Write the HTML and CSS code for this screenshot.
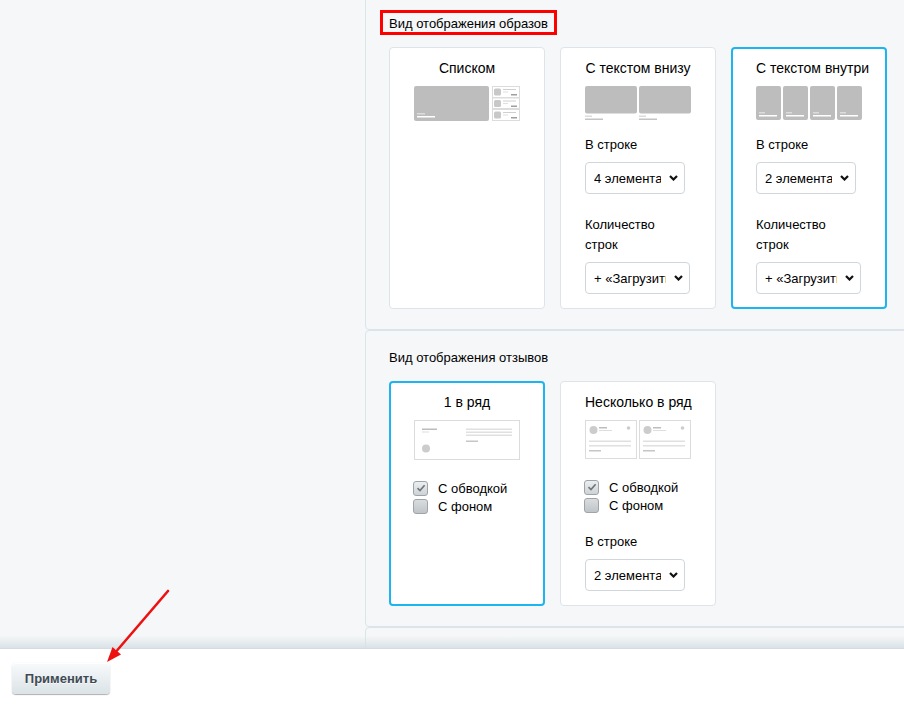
FILE: index.html
```html
<!DOCTYPE html>
<html lang="ru">
<head>
<meta charset="utf-8">
<title>Настройки</title>
<link rel="stylesheet" href="styles.css">
</head>
<body>
<div class="app">
  <div class="page">
    <div class="side"></div>
    <div class="content">
      <section class="sec sec1">
        <div class="sec-title marked">Вид отображения образов</div>
        <div class="cards">
          <div class="card">
            <div class="card-title">Списком</div>
            <svg class="thumb" width="106" height="35" viewBox="0 0 106 35">
              <rect x="0" y="0" width="75" height="35" rx="2" fill="#bdbdbd"/>
              <rect x="3" y="27" width="8" height="1.5" fill="#dcdcdc"/>
              <rect x="3" y="30" width="18" height="1.5" fill="#ffffff"/>
              <g fill="#fff" stroke="#dcdcdc" stroke-width="1">
                <rect x="78.5" y="0.5" width="27" height="11"/>
                <rect x="78.5" y="12" width="27" height="10.5"/>
                <rect x="78.5" y="23.5" width="27" height="11"/>
              </g>
              <g>
                <rect x="80" y="2.5" width="7" height="7" rx="1.5" fill="#c8c8c8"/>
                <rect x="89" y="3" width="13" height="1" fill="#cfcfcf"/>
                <rect x="89" y="5.5" width="5" height="1" fill="#e0e0e0"/>
                <rect x="97" y="8" width="6" height="1.5" fill="#9e9e9e"/>
                <rect x="80" y="14" width="7" height="7" rx="1.5" fill="#c8c8c8"/>
                <rect x="89" y="14.5" width="13" height="1" fill="#cfcfcf"/>
                <rect x="89" y="17" width="5" height="1" fill="#e0e0e0"/>
                <rect x="97" y="19.5" width="6" height="1.5" fill="#9e9e9e"/>
                <rect x="80" y="25.5" width="7" height="7" rx="1.5" fill="#c8c8c8"/>
                <rect x="89" y="26" width="13" height="1" fill="#cfcfcf"/>
                <rect x="89" y="28.5" width="5" height="1" fill="#e0e0e0"/>
                <rect x="97" y="31" width="6" height="1.5" fill="#9e9e9e"/>
              </g>
            </svg>
          </div>
          <div class="card">
            <div class="card-title">С текстом внизу</div>
            <svg class="thumb" width="106" height="35" viewBox="0 0 106 35">
              <rect x="0" y="0" width="52" height="27.5" rx="2" fill="#bdbdbd"/>
              <rect x="54" y="0" width="52" height="27.5" rx="2" fill="#bdbdbd"/>
              <rect x="0" y="29.5" width="7" height="1.5" fill="#dcdcdc"/>
              <rect x="0" y="32.5" width="18" height="1.5" fill="#c4c4c4"/>
              <rect x="54" y="29.5" width="7" height="1.5" fill="#dcdcdc"/>
              <rect x="54" y="32.5" width="18" height="1.5" fill="#c4c4c4"/>
            </svg>
            <div class="field first">
              <div class="label">В строке</div>
              <div class="select w100"><span class="val">4 элемента</span><svg class="chev" width="9" height="6" viewBox="0 0 9 6"><path d="M1 1 L4.5 4.5 L8 1" fill="none" stroke="#111" stroke-width="2.2"/></svg></div>
            </div>
            <div class="field">
              <div class="label">Количество<br>строк</div>
              <div class="select w105"><span class="val">+ «Загрузить ещё»</span><svg class="chev" width="9" height="6" viewBox="0 0 9 6"><path d="M1 1 L4.5 4.5 L8 1" fill="none" stroke="#111" stroke-width="2.2"/></svg></div>
            </div>
          </div>
          <div class="card sel">
            <div class="card-title">С текстом внутри</div>
            <svg class="thumb" width="106" height="35" viewBox="0 0 106 35">
              <g fill="#bdbdbd">
                <rect x="0" y="0" width="25" height="34" rx="2"/>
                <rect x="27" y="0" width="25" height="34" rx="2"/>
                <rect x="54" y="0" width="25" height="34" rx="2"/>
                <rect x="81" y="0" width="25" height="34" rx="2"/>
              </g>
              <g fill="#dcdcdc">
                <rect x="3" y="26" width="6" height="1.5"/>
                <rect x="30" y="26" width="6" height="1.5"/>
                <rect x="57" y="26" width="6" height="1.5"/>
                <rect x="84" y="26" width="6" height="1.5"/>
              </g>
              <g fill="#fff">
                <rect x="3" y="29" width="18" height="1.5"/>
                <rect x="30" y="29" width="18" height="1.5"/>
                <rect x="57" y="29" width="18" height="1.5"/>
                <rect x="84" y="29" width="18" height="1.5"/>
              </g>
            </svg>
            <div class="field first">
              <div class="label">В строке</div>
              <div class="select w100"><span class="val">2 элемента</span><svg class="chev" width="9" height="6" viewBox="0 0 9 6"><path d="M1 1 L4.5 4.5 L8 1" fill="none" stroke="#111" stroke-width="2.2"/></svg></div>
            </div>
            <div class="field">
              <div class="label">Количество<br>строк</div>
              <div class="select w105"><span class="val">+ «Загрузить ещё»</span><svg class="chev" width="9" height="6" viewBox="0 0 9 6"><path d="M1 1 L4.5 4.5 L8 1" fill="none" stroke="#111" stroke-width="2.2"/></svg></div>
            </div>
          </div>
        </div>
      </section>

      <section class="sec sec2">
        <div class="sec-title">Вид отображения отзывов</div>
        <div class="cards">
          <div class="card sel">
            <div class="card-title">1 в ряд</div>
            <svg class="thumb" width="106" height="40" viewBox="0 0 106 40">
              <rect x="0.5" y="0.5" width="105" height="39" fill="#fff" stroke="#dcdcdc"/>
              <rect x="8" y="8.5" width="15" height="1.5" fill="#bdbdbd"/>
              <rect x="8" y="11.5" width="7" height="1" fill="#dedede"/>
              <circle cx="12" cy="28.5" r="4" fill="#cccccc"/>
              <rect x="52" y="8.5" width="46" height="1.5" fill="#e0e0e0"/>
              <rect x="52" y="11.5" width="46" height="1.5" fill="#e0e0e0"/>
              <rect x="52" y="14.5" width="46" height="1.5" fill="#e0e0e0"/>
              <rect x="52" y="20.5" width="12" height="1.5" fill="#c6c6c6"/>
            </svg>
            <div class="checks">
              <div class="check"><span class="box on"><svg width="12" height="12" viewBox="0 0 12 12"><path d="M2.5 6.2 L5 8.6 L9.6 3.2" fill="none" stroke="#6f767b" stroke-width="1.6"/></svg></span>С обводкой</div>
              <div class="check"><span class="box"></span>С фоном</div>
            </div>
          </div>
          <div class="card">
            <div class="card-title">Несколько в ряд</div>
            <svg class="thumb" width="106" height="40" viewBox="0 0 106 40">
              <g>
                <rect x="0.5" y="0.5" width="51" height="38" fill="#fff" stroke="#dcdcdc"/>
                <circle cx="8.5" cy="10" r="4" fill="#cccccc"/>
                <rect x="14" y="7" width="8" height="1.5" fill="#bdbdbd"/>
                <rect x="14" y="10" width="13" height="1" fill="#dedede"/>
                <circle cx="43.5" cy="8" r="1.8" fill="#cccccc"/>
                <rect x="4" y="20.5" width="42" height="1.5" fill="#e0e0e0"/>
                <rect x="4" y="25" width="42" height="1.5" fill="#e0e0e0"/>
                <rect x="4" y="30" width="12" height="1.5" fill="#c6c6c6"/>
              </g>
              <g transform="translate(54 0)">
                <rect x="0.5" y="0.5" width="51" height="38" fill="#fff" stroke="#dcdcdc"/>
                <circle cx="8.5" cy="10" r="4" fill="#cccccc"/>
                <rect x="14" y="7" width="8" height="1.5" fill="#bdbdbd"/>
                <rect x="14" y="10" width="13" height="1" fill="#dedede"/>
                <circle cx="43.5" cy="8" r="1.8" fill="#cccccc"/>
                <rect x="4" y="20.5" width="42" height="1.5" fill="#e0e0e0"/>
                <rect x="4" y="25" width="42" height="1.5" fill="#e0e0e0"/>
                <rect x="4" y="30" width="12" height="1.5" fill="#c6c6c6"/>
              </g>
            </svg>
            <div class="checks">
              <div class="check"><span class="box on"><svg width="12" height="12" viewBox="0 0 12 12"><path d="M2.5 6.2 L5 8.6 L9.6 3.2" fill="none" stroke="#6f767b" stroke-width="1.6"/></svg></span>С обводкой</div>
              <div class="check"><span class="box"></span>С фоном</div>
            </div>
            <div class="field after-checks">
              <div class="label">В строке</div>
              <div class="select w100"><span class="val">2 элемента</span><svg class="chev" width="9" height="6" viewBox="0 0 9 6"><path d="M1 1 L4.5 4.5 L8 1" fill="none" stroke="#111" stroke-width="2.2"/></svg></div>
            </div>
          </div>
        </div>
      </section>

      <section class="sec sec3"></section>
    </div>
  </div>
  <div class="bar">
    <button class="btn" type="button">Применить</button>
  </div>
  <svg class="arrow" width="904" height="704" viewBox="0 0 904 704">
    <line x1="168" y1="591" x2="117" y2="650.5" stroke="#ee1111" stroke-width="2.6" stroke-linecap="round"/>
    <polygon points="107,662 121,654.5 112.5,647" fill="#ee1111"/>
  </svg>
</div>
</body>
</html>
```

FILE: styles.css
```css
* { box-sizing: border-box; }

html, body {
  margin: 0;
  padding: 0;
}

body {
  font-family: "Liberation Sans", Arial, sans-serif;
  background: #f5f7f8;
  color: #000;
  overflow: hidden;
}

.app {
  position: relative;
  width: 904px;
  height: 704px;
  display: flex;
  flex-direction: column;
  overflow: hidden;
}

.page {
  flex: 1 1 auto;
  min-height: 0;
  display: flex;
  overflow: hidden;
}

.side {
  flex: 0 0 365px;
}

.content {
  flex: 0 0 620px;
  display: flex;
  flex-direction: column;
}

.sec {
  border: 1px solid #dce4e9;
  border-radius: 4px;
  padding: 18px 23px 20px 23px;
}

.sec1 {
  margin-top: -10px;
  padding-top: 19px;
}

.sec3 {
  flex: 1 1 auto;
}

.sec-title {
  font-size: 13px;
  line-height: 18px;
  margin-bottom: 14px;
}

.sec-title.marked {
  display: inline-block;
  border: 3px solid #ff0000;
  padding: 3px 6px 1px 6px;
  margin-left: -9px;
  margin-bottom: 12px;
  line-height: 15px;
}

.cards {
  display: flex;
  gap: 15px;
  align-items: stretch;
}

.card {
  width: 156px;
  background: #fff;
  border: 1px solid #dde5ea;
  border-radius: 4px;
  padding: 10px 24px 14px 24px;
}

.card.sel {
  border: 2px solid #1db5ef;
  padding: 9px 23px 13px 23px;
}

.card-title {
  font-size: 14px;
  line-height: 20px;
  text-align: center;
  margin-bottom: 8px;
  white-space: nowrap;
}

.thumb {
  display: block;
}

.field {
  margin-top: 20px;
}

.field.first {
  margin-top: 13px;
}

.field.after-checks {
  margin-top: 17px;
}

.label {
  font-size: 13px;
  line-height: 20px;
  padding-top: 1px;
  margin-bottom: 7px;
}

.select {
  height: 32px;
  background: #fff;
  border: 1px solid #cfd7dd;
  border-radius: 4px;
  display: flex;
  align-items: center;
  padding: 0 6px 0 8px;
  font-size: 13px;
  color: #000;
}

.select.w100 { width: 100px; }
.select.w105 { width: 105px; }

.select .val {
  flex: 1 1 auto;
  min-width: 0;
  overflow: hidden;
  white-space: nowrap;
  margin-right: 8px;
}

.select .chev {
  flex: 0 0 auto;
  display: block;
}

.checks {
  margin-top: 18px;
}

.card.sel .checks {
  margin-top: 19px;
}

.check {
  display: flex;
  align-items: center;
  height: 18px;
  font-size: 13px;
  margin-left: -1px;
}

.box {
  width: 15px;
  height: 15px;
  flex: 0 0 15px;
  border: 1px solid #9ea5aa;
  border-radius: 3px;
  background: linear-gradient(#dadddf, #bfc4c8);
  margin-right: 10px;
  display: flex;
  align-items: center;
  justify-content: center;
}

.box.on {
  background: linear-gradient(#eceeef, #cfd3d6);
}

.box svg { display: block; }

.bar {
  flex: 0 0 56px;
  position: relative;
  background: #fff;
  border-top: 1px solid #d3dce1;
}

.bar::before {
  content: "";
  position: absolute;
  left: 0;
  right: 0;
  top: -13px;
  height: 12px;
  background: linear-gradient(rgba(214, 224, 229, 0), rgba(214, 224, 229, 0.9));
}

.btn {
  margin: 14px 0 0 12px;
  width: 98px;
  height: 31px;
  border: none;
  border-radius: 4px;
  background: linear-gradient(#f8fafb, #dbe3e6);
  box-shadow: 0 0 1px rgba(0, 0, 0, 0.15), 0 1px 1px rgba(0, 0, 0, 0.3), inset 0 1px #fff;
  color: #3f4b54;
  font-family: "Liberation Sans", Arial, sans-serif;
  font-weight: bold;
  font-size: 13px;
  text-shadow: 0 1px rgba(255, 255, 255, 0.7);
  padding: 0;
  cursor: pointer;
}

.arrow {
  position: absolute;
  left: 0;
  top: 0;
  pointer-events: none;
}
```
